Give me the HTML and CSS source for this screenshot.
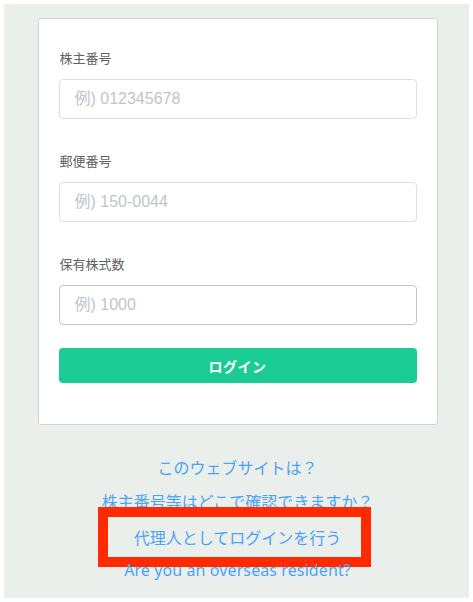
FILE: index.html
```html
<!DOCTYPE html>
<html lang="ja">
<head>
<meta charset="utf-8">
<title>ログイン</title>
<link rel="stylesheet" href="styles.css">
</head>
<body>
<div class="page">
  <form class="card">
    <div class="field">
      <label class="label">株主番号</label>
      <input class="input" type="text" placeholder="例) 012345678">
    </div>
    <div class="field">
      <label class="label">郵便番号</label>
      <input class="input" type="text" placeholder="例) 150-0044">
    </div>
    <div class="field">
      <label class="label">保有株式数</label>
      <input class="input input-hover" type="text" placeholder="例) 1000">
    </div>
    <button class="btn" type="button">ログイン</button>
  </form>
  <div class="links">
    <a class="link" href="#">このウェブサイトは？</a>
    <a class="link" href="#">株主番号等はどこで確認できますか？</a>
    <a class="link link-marked" href="#">代理人としてログインを行う<span class="mark"></span></a>
    <a class="link link-en" href="#">Are you an overseas resident?</a>
  </div>
</div>
</body>
</html>
```

FILE: styles.css
```css
html, body {
  margin: 0;
  padding: 0;
  background: #ffffff;
}
body {
  padding: 4px;
  font-family: "Noto Sans CJK JP", "Noto Sans", sans-serif;
}
.page {
  background: #ebefec;
  width: 465px;
  height: 594px;
  box-sizing: border-box;
  padding-top: 14px;
  display: flex;
  flex-direction: column;
  align-items: center;
}
.card {
  box-sizing: border-box;
  width: 400px;
  margin-left: 2px;
  background: #ffffff;
  border: 1px solid #d2d4d6;
  border-radius: 3px;
  padding: 29px 20px 41px 20px;
  display: flex;
  flex-direction: column;
}
.field {
  display: flex;
  flex-direction: column;
  margin-bottom: 32px;
}
.field:nth-child(3) {
  margin-bottom: 23px;
}
.label {
  font-size: 13px;
  line-height: 20px;
  color: #606266;
  margin-bottom: 11px;
  padding-left: 1px;
}
.input {
  box-sizing: border-box;
  height: 40px;
  width: 100%;
  border: 1px solid #dcdfe6;
  border-radius: 4px;
  padding: 0 15px;
  font-family: "Liberation Sans", "Noto Sans CJK JP", sans-serif;
  font-size: 16px;
  color: #606266;
  background: #fff;
  outline: none;
}
.input::placeholder {
  color: #c0c4cc;
}
.input-hover {
  border-color: #bfc4cd;
}
.btn {
  height: 35px;
  width: 100%;
  border: none;
  border-radius: 4px;
  background: #1acb94;
  color: #ffffff;
  font-family: "Noto Sans CJK JP", "Noto Sans", sans-serif;
  font-size: 14px;
  font-weight: 700;
  letter-spacing: 0.5px;
}
.links {
  margin-top: 25px;
  display: flex;
  flex-direction: column;
  align-items: center;
}
.link {
  display: block;
  position: relative;
  font-size: 16px;
  line-height: 34px;
  color: #4aa3f8;
  text-decoration: none;
  margin-left: 2px;
}
.link:nth-child(3) {
  margin-top: 2px;
}
.link-en {
  font-family: "Noto Sans", "Noto Sans CJK JP", sans-serif;
  letter-spacing: 0.1px;
  margin-top: -1px;
}
.mark {
  position: absolute;
  left: -36px;
  right: -30px;
  top: -13px;
  bottom: -13px;
  border: 10px solid #ff2a00;
  pointer-events: none;
}
```
